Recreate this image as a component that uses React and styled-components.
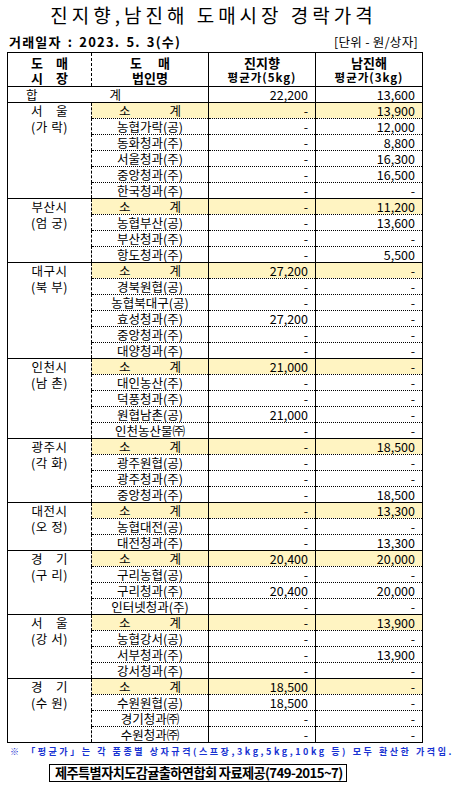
import React from 'react';
import styled, { createGlobalStyle } from 'styled-components';

const Global = createGlobalStyle`
  html, body { margin: 0; padding: 0; background: #fff; }
  body { font-family: "Noto Sans CJK KR", "Noto Sans", sans-serif; color: #000; }
`;

const Page = styled.div`
  width: 453px;
  height: 785px;
  overflow: hidden;
`;

const Title = styled.h1`
  margin: 0;
  height: 30px;
  line-height: 30px;
  text-align: center;
  font-size: 19px;
  font-weight: 400;
  letter-spacing: 4px;
  padding-right: 26px;
  white-space: nowrap;
`;

const InfoBar = styled.div`
  display: flex;
  justify-content: space-between;
  align-items: center;
  height: 22px;
  padding: 0 35px 0 9px;
  font-size: 13px;
`;

const DateLabel = styled.span`
  font-weight: 700;
  letter-spacing: 1.2px;
  word-spacing: 2px;
`;

const Unit = styled.span`
  font-size: 12.5px;
  letter-spacing: 0.3px;
`;

const Table = styled.table`
  margin-left: 7px;
  width: 416px;
  border-collapse: collapse;
  table-layout: fixed;
  border: 1px solid #000;
  font-size: 12.5px;
`;

const HeadCell = styled.th`
  height: 33px;
  padding: 0;
  border-right: 1px ${p => (p.$dashed ? 'dashed' : 'solid')} #000;
  border-bottom: 1px solid #000;
  font-weight: 700;
  font-size: 13px;
  line-height: 15px;
  vertical-align: middle;
  text-align: center;
  white-space: nowrap;
`;

const HeadSub = styled.div`
  font-size: 11.5px;
  letter-spacing: 1px;
`;

const Row = styled.tr`
  height: 16px;
`;

const GroupCell = styled.td`
  padding: 0;
  vertical-align: top;
  text-align: center;
  border-right: 1px dashed #000;
  border-bottom: 1px solid #000;
  white-space: nowrap;
`;

const GroupLine = styled.div`
  height: 16px;
  line-height: 16px;
  letter-spacing: 0.5px;
`;

const Cell = styled.td`
  padding: 0 ${p => (p.$num ? '7px' : '0')} 0 0;
  height: 15px;
  line-height: 15px;
  text-align: ${p => (p.$num ? 'right' : 'center')};
  border-right: 1px solid #000;
  border-bottom: 1px ${p => (p.$last ? 'solid' : 'dotted')} #000;
  background: ${p => (p.$sub ? '#fff4c2' : 'transparent')};
  white-space: nowrap;
  overflow: hidden;
`;

const TotalLabel = styled.div`
  display: flex;
  gap: 72px;
  padding-left: 18px;
`;

const SubLabel = styled.span`
  display: inline-flex;
  justify-content: space-between;
  width: 62px;
`;

const Note = styled.p`
  margin: 2px 0 0;
  height: 14px;
  line-height: 14px;
  padding-left: 10px;
  font-size: 9px;
  font-weight: 700;
  color: #1732d2;
  letter-spacing: 2.55px;
  white-space: nowrap;
`;

const FooterBox = styled.div`
  box-sizing: border-box;
  margin: 5px 0 0 49px;
  width: 298px;
  height: 18px;
  border: 1px solid #000;
  padding-left: 5px;
  font-weight: 700;
  font-size: 13.2px;
  line-height: 16px;
  letter-spacing: -0.6px;
  white-space: nowrap;
  overflow: hidden;
`;

const groups = [
  { city: '서　울', area: '(가 락)', sub: ['-', '13,900'], rows: [
    ['농협가락(공)', '-', '12,000'], ['동화청과(주)', '-', '8,800'], ['서울청과(주)', '-', '16,300'],
    ['중앙청과(주)', '-', '16,500'], ['한국청과(주)', '-', '-']] },
  { city: '부산시', area: '(엄 궁)', sub: ['-', '11,200'], rows: [
    ['농협부산(공)', '-', '13,600'], ['부산청과(주)', '-', '-'], ['항도청과(주)', '-', '5,500']] },
  { city: '대구시', area: '(북 부)', sub: ['27,200', '-'], rows: [
    ['경북원협(공)', '-', '-'], ['농협북대구(공)', '-', '-'], ['효성청과(주)', '27,200', '-'],
    ['중앙청과(주)', '-', '-'], ['대양청과(주)', '-', '-']] },
  { city: '인천시', area: '(남 촌)', sub: ['21,000', '-'], rows: [
    ['대인농산(주)', '-', '-'], ['덕풍청과(주)', '-', '-'], ['원협남촌(공)', '21,000', '-'],
    ['인천농산물㈜', '-', '-']] },
  { city: '광주시', area: '(각 화)', sub: ['-', '18,500'], rows: [
    ['광주원협(공)', '-', '-'], ['광주청과(주)', '-', '-'], ['중앙청과(주)', '-', '18,500']] },
  { city: '대전시', area: '(오 정)', sub: ['-', '13,300'], rows: [
    ['농협대전(공)', '-', '-'], ['대전청과(주)', '-', '13,300']] },
  { city: '경　기', area: '(구 리)', sub: ['20,400', '20,000'], rows: [
    ['구리농협(공)', '-', '-'], ['구리청과(주)', '20,400', '20,000'], ['인터넷청과(주)', '-', '-']] },
  { city: '서　울', area: '(강 서)', sub: ['-', '13,900'], rows: [
    ['농협강서(공)', '-', '-'], ['서부청과(주)', '-', '13,900'], ['강서청과(주)', '-', '-']] },
  { city: '경　기', area: '(수 원)', sub: ['18,500', '-'], rows: [
    ['수원원협(공)', '18,500', '-'], ['경기청과㈜', '-', '-'], ['수원청과㈜', '-', '-']] },
];

function Group({ g }) {
  const n = g.rows.length + 1;
  const subLast = n === 1;
  return (
    <>
      <Row>
        <GroupCell rowSpan={n}>
          <GroupLine>{g.city}</GroupLine>
          <GroupLine>{g.area}</GroupLine>
        </GroupCell>
        <Cell $sub $last={subLast}><SubLabel><span>소</span><span>계</span></SubLabel></Cell>
        <Cell $sub $num $last={subLast}>{g.sub[0]}</Cell>
        <Cell $sub $num $last={subLast}>{g.sub[1]}</Cell>
      </Row>
      {g.rows.map((r, i) => {
        const last = i === g.rows.length - 1;
        return (
          <Row key={i}>
            <Cell $last={last}>{r[0]}</Cell>
            <Cell $num $last={last}>{r[1]}</Cell>
            <Cell $num $last={last}>{r[2]}</Cell>
          </Row>
        );
      })}
    </>
  );
}

export default function App() {
  return (
    <Page>
      <Global />
      <Title>진지향,남진해 도매시장 경락가격</Title>
      <InfoBar>
        <DateLabel>거래일자 : 2023. 5. 3(수)</DateLabel>
        <Unit>[단위 - 원/상자]</Unit>
      </InfoBar>
      <Table>
        <colgroup>
          <col style={{ width: 84 }} />
          <col style={{ width: 117 }} />
          <col style={{ width: 107 }} />
          <col style={{ width: 107 }} />
        </colgroup>
        <thead>
          <tr>
            <HeadCell $dashed><div>도　매</div><div>시　장</div></HeadCell>
            <HeadCell><div>도　&nbsp;매</div><div>법인명</div></HeadCell>
            <HeadCell><div>진지향</div><HeadSub>평균가(5kg)</HeadSub></HeadCell>
            <HeadCell><div>남진해</div><HeadSub>평균가(3kg)</HeadSub></HeadCell>
          </tr>
        </thead>
        <tbody>
          <Row>
            <Cell colSpan={2} $last><TotalLabel><span>합</span><span>계</span></TotalLabel></Cell>
            <Cell $num $last>22,200</Cell>
            <Cell $num $last>13,600</Cell>
          </Row>
          {groups.map((g, i) => <Group key={i} g={g} />)}
        </tbody>
      </Table>
      <Note>※ 「평균가」는 각 품종별 상자규격(스프장,3kg,5kg,10kg 등) 모두 환산한 가격임.</Note>
      <FooterBox>제주특별자치도감귤출하연합회 자료제공(749-2015~7)</FooterBox>
    </Page>
  );
}
